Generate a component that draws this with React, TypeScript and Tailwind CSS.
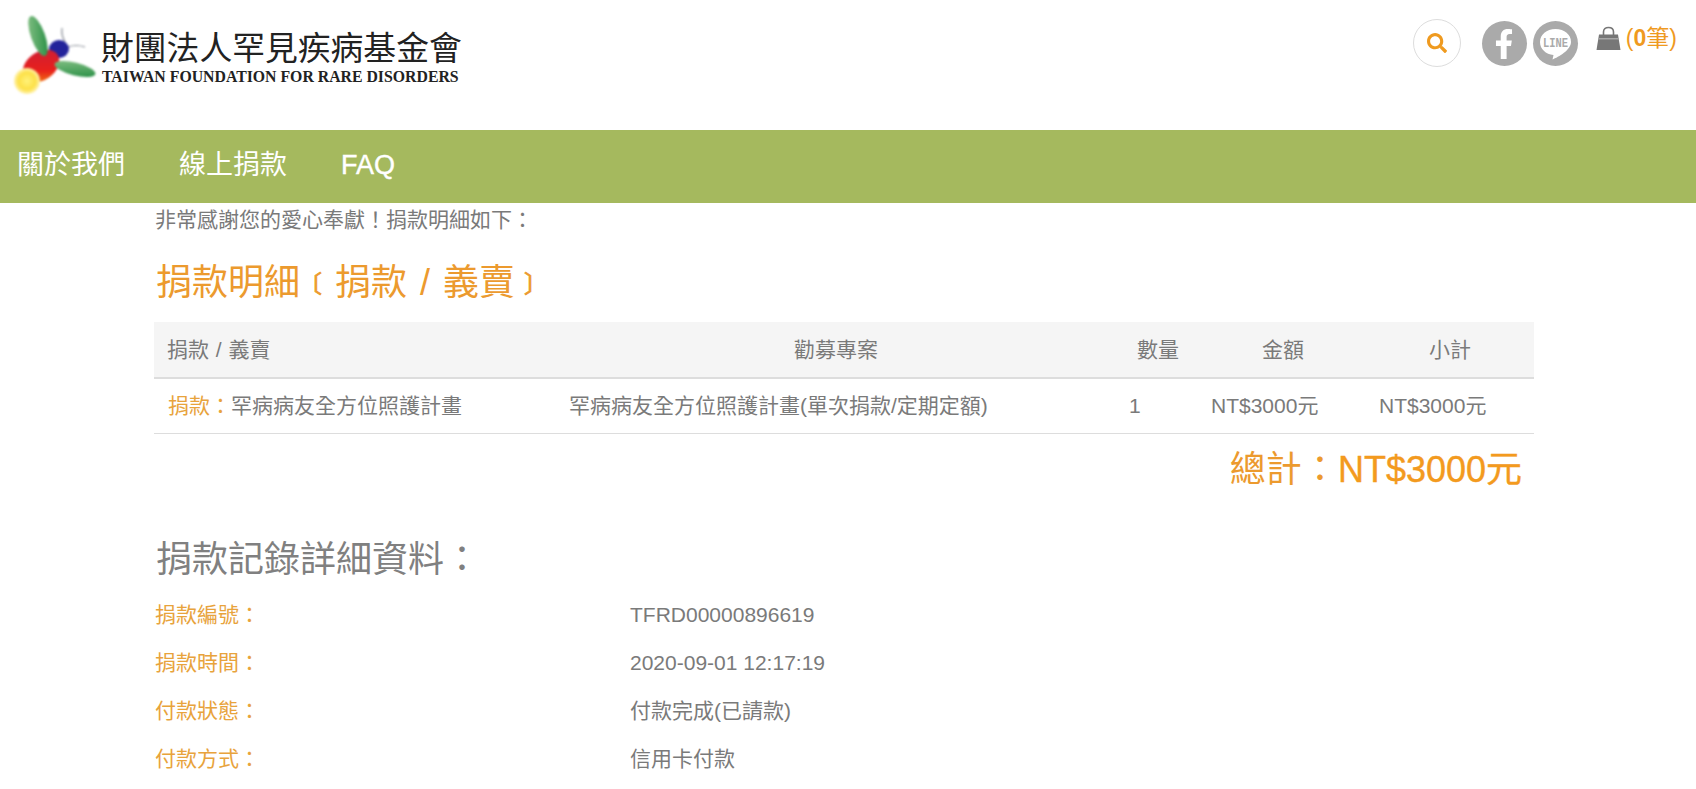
import React from 'react';
import { FaFacebookF, FaSearch } from 'react-icons/fa';

const rows = [
  ['捐款編號\uFF1A', 'TFRD00000896619'],
  ['捐款時間\uFF1A', '2020-09-01 12:17:19'],
  ['付款狀態\uFF1A', '付款完成(已請款)'],
  ['付款方式\uFF1A', '信用卡付款'],
];

const Logo = () => (
  <svg width="100" height="96" viewBox="0 0 100 96" className="shrink-0 blur-[0.8px]">
    <defs>
      <radialGradient id="glow">
        <stop offset="0" stopColor="#fff27a" />
        <stop offset="0.65" stopColor="#fde047" />
        <stop offset="1" stopColor="#fff3b0" />
      </radialGradient>
      <linearGradient id="body" x1="0" y1="1" x2="1" y2="0">
        <stop offset="0" stopColor="#f59e0b" />
        <stop offset="0.4" stopColor="#e8201c" />
        <stop offset="1" stopColor="#c81e3a" />
      </linearGradient>
      <linearGradient id="wing" x1="0" y1="0" x2="1" y2="1">
        <stop offset="0" stopColor="#8cc48a" />
        <stop offset="1" stopColor="#1f8a3f" />
      </linearGradient>
    </defs>
    <path d="M62 28 Q61 35 65 42 M68 47 Q76 44 85 47" fill="none" stroke="#8a8f98" strokeWidth="1.2" />
    <ellipse cx="59" cy="49" rx="10" ry="9" fill="#23239b" />
    <ellipse cx="41" cy="66" rx="20" ry="14" transform="rotate(-35 41 66)" fill="url(#body)" />
    <circle cx="27" cy="81" r="13" fill="url(#glow)" />
    <ellipse cx="38" cy="36" rx="7" ry="21" transform="rotate(-20 38 36)" fill="url(#wing)" />
    <ellipse cx="75" cy="69" rx="21" ry="6.5" transform="rotate(14 75 69)" fill="url(#wing)" />
  </svg>
);

const App: React.FC = () => {
  return (
    <div className="w-[1696px] h-[789px] overflow-hidden bg-white text-[#7a7a7a] font-['Liberation_Sans','Noto_Sans_CJK_TC',sans-serif]">
      {/* Header */}
      <div className="h-[130px] flex justify-between">
        <div className="flex h-fit">
          <Logo />
          <div className="ml-[1px] pt-[30px] text-[#222]">
            <div className="text-[32.8px] leading-[38px] whitespace-nowrap font-['Liberation_Serif','Noto_Sans_CJK_TC',serif]">財團法人罕見疾病基金會</div>
            <div className="mt-[1px] pl-[1px] text-[15.8px] leading-[16px] font-bold whitespace-nowrap font-['Liberation_Serif',serif]">TAIWAN FOUNDATION FOR RARE DISORDERS</div>
          </div>
        </div>
        <div className="flex items-start pt-[19px] pr-[19px]">
          <button className="w-[48px] h-[48px] rounded-full border border-[#ddd] flex items-center justify-center text-[#ef9a1f]">
            <FaSearch size={20} />
          </button>
          <div className="ml-[21px] mt-[2px] w-[45px] h-[45px] rounded-full bg-[#aaa] flex items-center justify-center text-white">
            <FaFacebookF size={30} />
          </div>
          <div className="ml-[6px] mt-[2px] w-[45px] h-[45px] rounded-full bg-[#aaa] flex items-center justify-center">
            <svg width="37" height="37" viewBox="0 0 37 37">
              <path d="M18.5 4C9.500 4 3 9.600 3 17c0 7 5.800 12.300 13.500 13l-1 4.500c6-2.500 18.500-9.500 18.500-17.500C34 9.600 27.500 4 18.500 4Z" fill="#fff" />
              <text x="18.500" y="22" textAnchor="middle" fontSize="12.500" fontFamily="'Liberation Mono',monospace" fontWeight="700" fill="#aaa" textLength="25" lengthAdjust="spacingAndGlyphs">LINE</text>
            </svg>
          </div>
          <div className="ml-[18px] flex items-center h-[28px] mt-[5px] whitespace-nowrap">
            <svg width="25" height="25" viewBox="0 0 25 25">
              <path d="M7.500 9V6C7.500 3.200 9.500 1.500 12.500 1.500S17.500 3.200 17.500 6V9" fill="none" stroke="#777" strokeWidth="1.600" />
              <path d="M3 8.500h19l2.500 15.500H.5Z" fill="#777" />
              <path d="M2.500 12h20l.3 1.500H2.200Z" fill="#a8a8a8" />
            </svg>
            <span className="ml-[5px] text-[23px] leading-[28px] text-[#ef9a1f]">(<b>0</b>筆)</span>
          </div>
        </div>
      </div>

      {/* Nav */}
      <nav className="h-[73px] bg-[#a5b95e] flex items-center pl-[17px] gap-[54px] text-[27px] text-white pb-[2px]">
        <a>關於我們</a>
        <a>線上捐款</a>
        <a className="[-webkit-text-stroke:0.4px_#fff]">FAQ</a>
      </nav>

      {/* Content */}
      <div className="w-[1380px] ml-[154px]">
        <p className="pl-[1px] text-[21px] leading-[34px]">非常感謝您的愛心奉獻{'\uFF01'}捐款明細如下{'\uFF1A'}</p>
        <h2 className="mt-[22px] pl-[2px] text-[36px] leading-[48px] text-[#ec9a2e] whitespace-nowrap [word-spacing:3px]">
          捐款明細<span className="inline-block align-[3px] -ml-[2px] mr-[13px] text-[24px] leading-[24px] [-webkit-text-stroke:0.8px_#ec9a2e]">〔</span>捐款 / 義賣<span className="inline-block align-[3px] ml-[9px] text-[24px] leading-[24px] [-webkit-text-stroke:0.8px_#ec9a2e]">〕</span>
        </h2>

        <table className="mt-[15px] w-full table-fixed border-collapse text-[21px]">
          <colgroup>
            <col className="w-[385px]" />
            <col className="w-[580px]" />
            <col className="w-[92px]" />
            <col className="w-[168px]" />
            <col className="w-[155px]" />
          </colgroup>
          <thead>
            <tr className="h-[56px] bg-[#f5f5f5] border-b-2 border-[#ddd]">
              <th className="pl-[13px] text-left font-normal [word-spacing:1px]">捐款 / 義賣</th>
              <th className="pl-[14px] font-normal">勸募專案</th>
              <th className="pr-[14px] font-normal">數量</th>
              <th className="pr-[24px] font-normal">金額</th>
              <th className="pr-[13px] font-normal">小計</th>
            </tr>
          </thead>
          <tbody>
            <tr className="h-[55px] border-b border-[#ddd]">
              <td className="pl-[14px] whitespace-nowrap"><span className="text-[#e8a33c]">捐款{'\uFF1A'}</span>罕病病友全方位照護計畫</td>
              <td className="pl-[30px] whitespace-nowrap">罕病病友全方位照護計畫(單次捐款/定期定額)</td>
              <td className="pl-[10px]">1</td>
              <td className="whitespace-nowrap">NT$3000元</td>
              <td className="whitespace-nowrap">NT$3000元</td>
            </tr>
          </tbody>
        </table>

        <div className="pr-[12px] pt-[11px] text-right text-[36px] leading-[50px] text-[#ec9a2e]">總計{'\uFF1A'}<span className="text-[#f39a1e] [-webkit-text-stroke:0.4px_#f39a1e]">NT$3000元</span></div>

        <h2 className="mt-[40px] pl-[2px] text-[36px] leading-[50px] text-[#808080]">捐款記錄詳細資料{'\uFF1A'}</h2>

        <dl className="mt-[6px]">
          {rows.map(([label, value]) => (
            <div key={label} className="flex h-[48px] items-center text-[21px]">
              <dt className="w-[476px] pl-[1px] text-[#e8a33c]">{label}</dt>
              <dd>{value}</dd>
            </div>
          ))}
        </dl>
      </div>
    </div>
  );
};

export default App;
